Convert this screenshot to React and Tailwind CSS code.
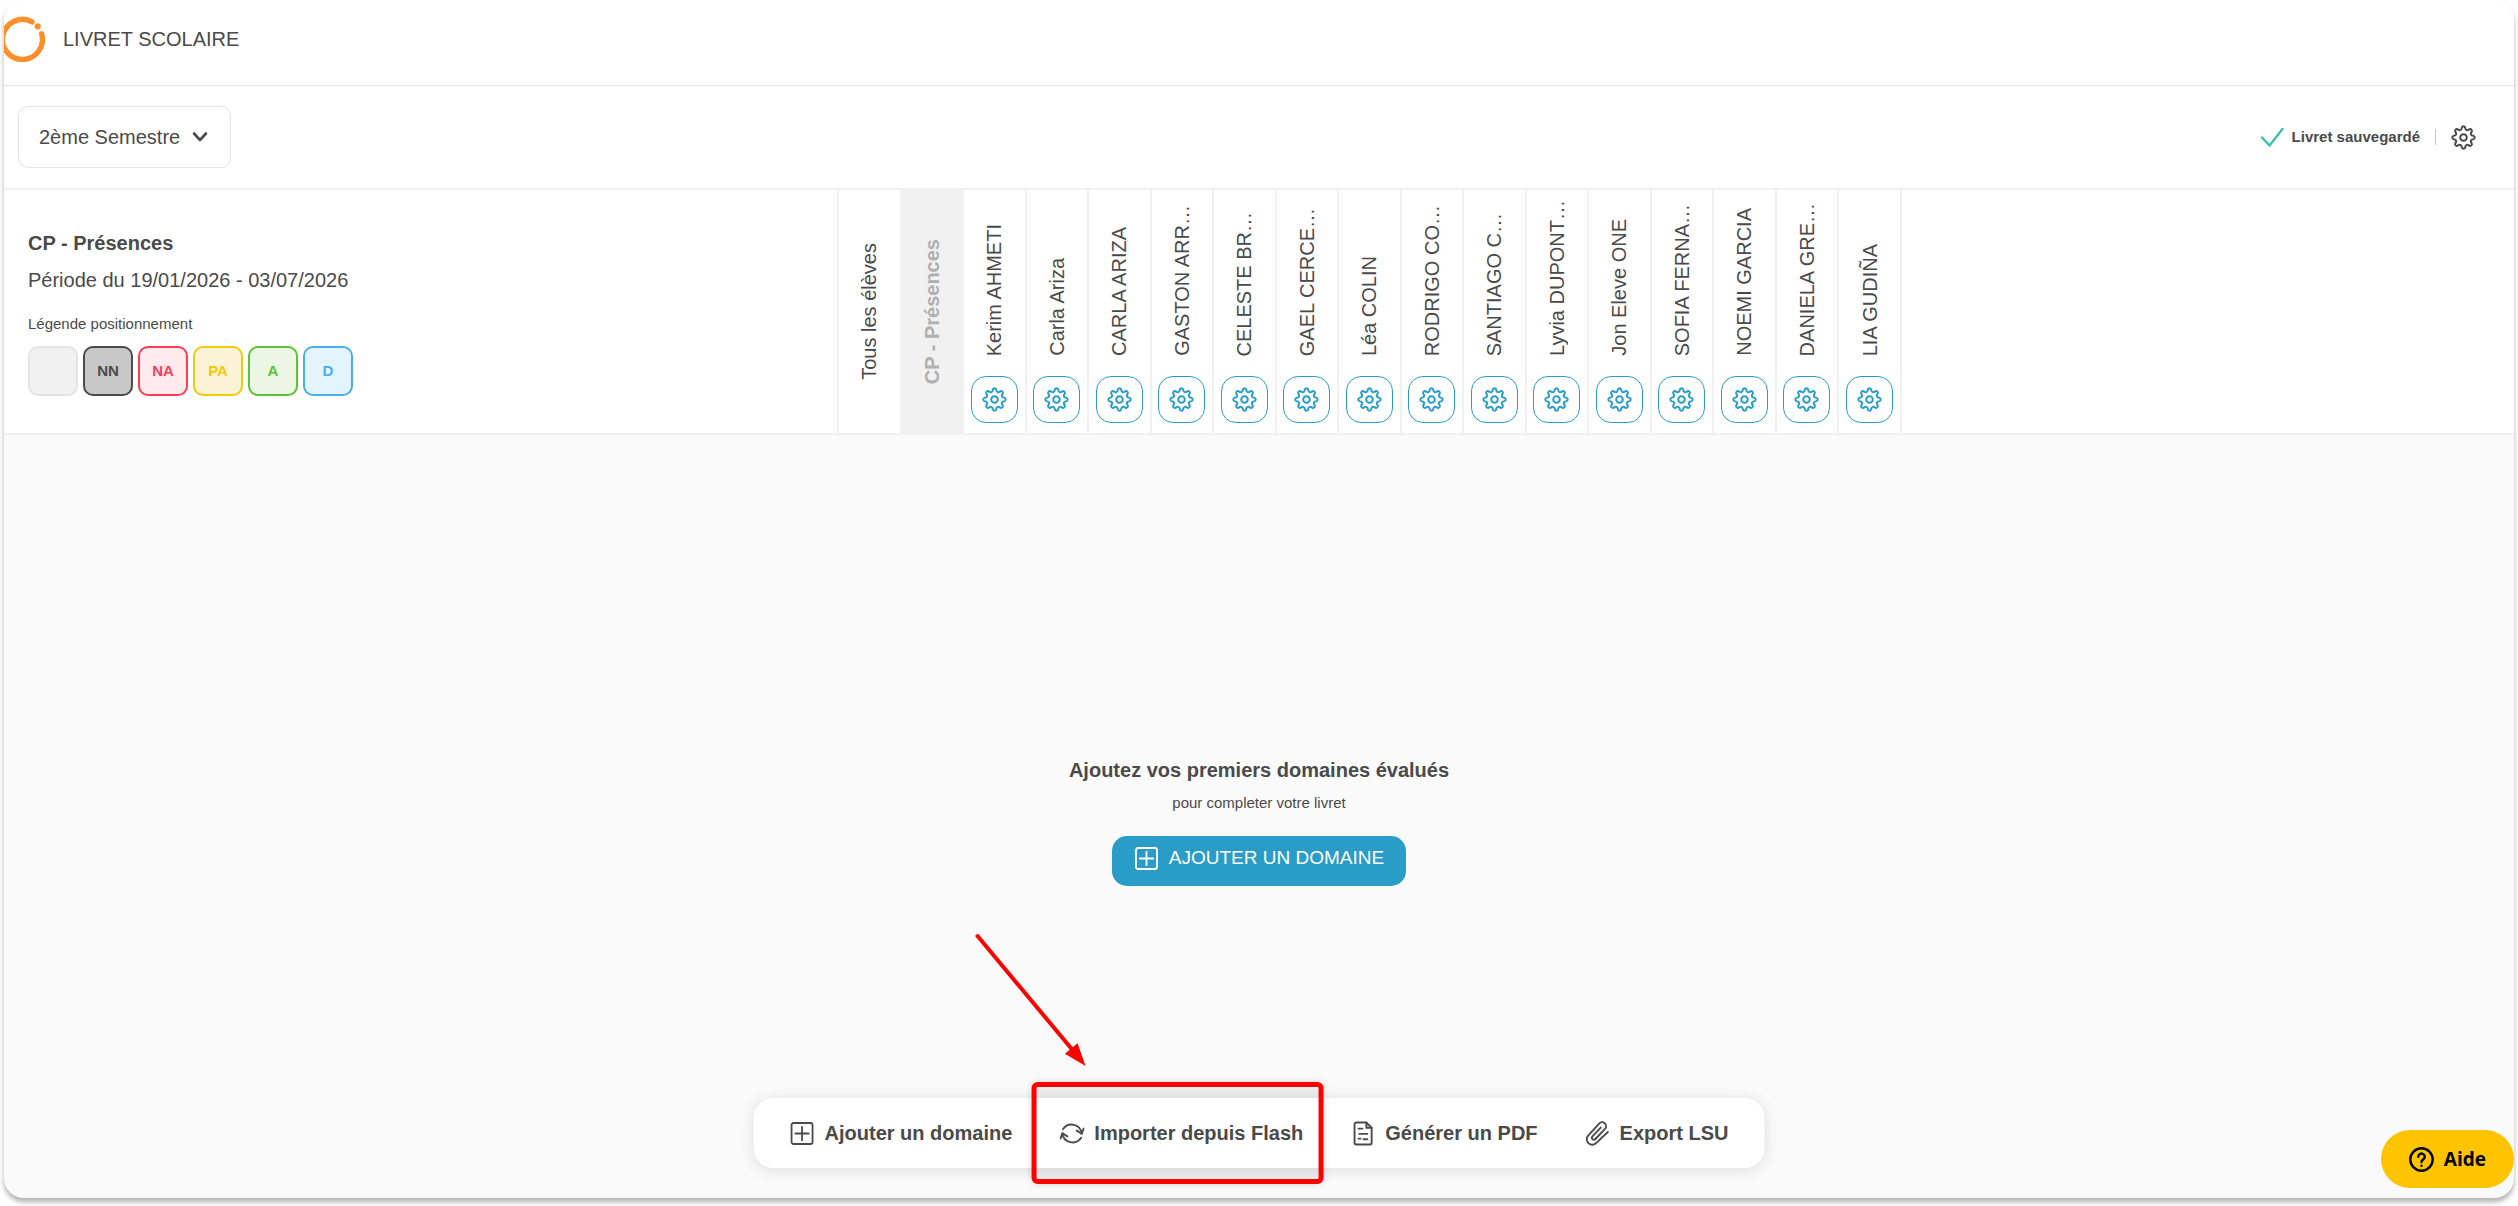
import React from 'react';

const levels = [
  { id: 'empty', label: '', style: 'bg-[#f1f1f1] border-[#e4e4e4]' },
  { id: 'nn', label: 'NN', style: 'bg-[#c8c8c8] border-[#4a4a4a] text-[#4a4a4a]' },
  { id: 'na', label: 'NA', style: 'bg-[#ffebee] border-[#ff3b58] text-[#ff3b58]' },
  { id: 'pa', label: 'PA', style: 'bg-[#fbf3d5] border-[#f2ca0c] text-[#f2ca0c]' },
  { id: 'a', label: 'A', style: 'bg-[#ebf6e5] border-[#5bc236] text-[#5bc236]' },
  { id: 'd', label: 'D', style: 'bg-[#e4f4ff] border-[#4aaee8] text-[#4aaee8]' }
];

const students = [
  'Kerim AHMETI',
  'Carla Ariza',
  'CARLA ARIZA',
  'GASTON ARR…',
  'CELESTE BR…',
  'GAEL CERCE…',
  'Léa COLIN',
  'RODRIGO CO…',
  'SANTIAGO C…',
  'Lyvia DUPONT…',
  'Jon Eleve ONE',
  'SOFIA FERNA…',
  'NOEMI GARCIA',
  'DANIELA GRE…',
  'LIA GUDIÑA'
];

// Eight rounded teeth, one pointing up
const gearPath = (() => {
  const point = (r, deg) => {
    const a = ((deg - 90) * Math.PI) / 180;
    return `${(12.5 + r * Math.cos(a)).toFixed(2)} ${(12.5 + r * Math.sin(a)).toFixed(2)}`;
  };
  let d = `M${point(10.2, -9)}`;
  for (let i = 0; i < 8; i++) {
    const a = i * 45;
    d += `A1.7 1.7 0 0 1 ${point(10.2, a + 9)}L${point(9.2, a + 12)}`;
    d += `A1.9 1.9 0 0 0 ${point(9.2, a + 33)}L${point(10.2, a + 36)}`;
  }
  return d + 'Z';
})();

const Gear = () => (
  <svg width="25" height="25" viewBox="0 0 25 25" fill="none" stroke="currentColor" strokeWidth="2" strokeLinejoin="round" aria-hidden="true">
    <path d={gearPath} />
    <circle cx="12.5" cy="12.5" r="3.3" />
  </svg>
);

const Logo = () => (
  <svg width="41" height="46" viewBox="4 0 41 46" fill="none" className="shrink-0" aria-hidden="true">
    <path d="M32 5.900A20 20 0 1 0 41.600 17.800" stroke="#ff8e2b" strokeWidth="5.400" strokeLinecap="round" />
    <circle cx="37.700" cy="10.300" r="3.100" fill="#ff8e2b" />
  </svg>
);

const PlusSquare = () => (
  <svg width="25" height="25" viewBox="0 0 25 25" fill="none" stroke="currentColor" strokeWidth="1.8" strokeLinecap="round" aria-hidden="true">
    <rect x="2" y="2" width="21" height="21" rx="2" />
    <path d="M12.5 5.8v13.4M5.8 12.5h13.4" />
  </svg>
);

const Sync = () => (
  <svg width="25" height="25" viewBox="0 0 25 25" fill="none" stroke="currentColor" strokeWidth="1.9" strokeLinecap="round" strokeLinejoin="round" aria-hidden="true">
    <path d="M3.4 8.2A10.3 10.3 0 0 1 22.2 12.6" />
    <path d="M17.2 9.6l4.9 3.2L24.1 7.600" />
    <path d="M21.6 16.8A10.3 10.3 0 0 1 2.800 12.400" />
    <path d="M7.800 15.400l-4.900-3.200L1 17.400" />
  </svg>
);

const Document = () => (
  <svg width="25" height="25" viewBox="0 0 25 25" fill="none" stroke="currentColor" strokeWidth="1.9" strokeLinecap="round" strokeLinejoin="round" aria-hidden="true">
    <path d="M15.8 1.500H5.700a1.700 1.700 0 0 0-1.700 1.700v18.600a1.700 1.700 0 0 0 1.700 1.700h13.700a1.700 1.700 0 0 0 1.700-1.700V6.800z" />
    <path d="M15.800 1.500v5.300h5.300" />
    <path d="M7.900 7.600h4M8.800 12.900h8M7.900 17.600h2.200M13 18.200h3.800" />
  </svg>
);

const Clip = () => (
  <svg width="25" height="25" viewBox="0 0 25 25" fill="none" stroke="currentColor" strokeWidth="1.9" strokeLinecap="round" strokeLinejoin="round" aria-hidden="true">
    <path d="M23.300 11L11.800 21.900a5.400 5.400 0 0 1-8.200-7.300L14.600 2.600a3.900 3.900 0 0 1 5.900 5.200L10.900 18a2 2 0 0 1-3-2.700L16.200 6.600" />
  </svg>
);

const StudentHeader = ({ name }) => (
  <th scope="col" className="border-r-2 border-[#f1f1f1] p-0 font-normal">
    <div className="flex h-[243px] flex-col items-center justify-end gap-5 pb-[10px]">
      <span className="rotate-180 leading-6 whitespace-nowrap [writing-mode:vertical-rl]">{name}</span>
      <button
        type="button"
        aria-label={`Options ${name}`}
        className="flex size-[47px] items-center justify-center rounded-[15px] border border-[#2a9cc8] text-[#2a9cc8]"
      >
        <Gear />
      </button>
    </div>
  </th>
);

const ToolbarButton = ({ icon, label, children }) => (
  <button type="button" className="relative flex h-full items-center gap-[10px] font-bold whitespace-nowrap">
    {icon}
    {label}
    {children}
  </button>
);

// Red frame and arrow around the highlighted action
const Highlight = () => (
  <span className="pointer-events-none absolute -inset-y-4 -right-5 -left-7 flex flex-col justify-between rounded-md border-5 border-[#ff0000] shadow-[0_0_6px_rgba(0,0,0,0.15)]">
    <span className="h-[11px] bg-black/5" />
    <span className="h-[11px] bg-black/5" />
    <svg width="120" height="140" viewBox="0 0 120 140" className="absolute -top-[157px] -left-[67px]" aria-hidden="true">
      <path d="M8 6L103 120" stroke="#ff0000" strokeWidth="4" strokeLinecap="round" />
      <path d="M116 136L95.300 123.700L108 113.300Z" fill="#ff0000" />
    </svg>
  </span>
);

const App = () => (
  <div className="min-h-screen overflow-hidden bg-white px-1 pb-2 font-['Liberation_Sans',Arial,sans-serif] text-[20px] text-[#4a4a4a]">
    <div className="relative flex min-h-[calc(100vh-8px)] flex-col rounded-[20px] bg-[#fafafa] shadow-[0_4px_5px_rgba(0,0,0,0.3)]">
      <header className="flex h-[86px] items-center gap-[18px] rounded-t-[20px] border-b border-[#e4e4e4] bg-white pb-[7px]">
        <Logo />
        <h1 className="text-[20px]">LIVRET SCOLAIRE</h1>
      </header>

      <div className="flex items-center justify-between border-b-2 border-[#f1f1f1] bg-white py-5 pr-[38px] pl-[14px]">
        <div className="relative">
          <select
            aria-label="Période"
            className="h-[62px] w-[213px] appearance-none rounded-[10px] border border-[#e4e4e4] bg-white pl-5"
          >
            <option>2ème Semestre</option>
          </select>
          <svg width="16" height="16" viewBox="0 0 16 16" fill="none" className="pointer-events-none absolute top-[23px] right-[23px]" aria-hidden="true">
            <path d="M2 4.500l6 6.500 6-6.500" stroke="#4a4a4a" strokeWidth="2.600" strokeLinecap="round" strokeLinejoin="round" />
          </svg>
        </div>
        <div className="flex items-center">
          <svg width="24" height="20" viewBox="0 0 24 20" fill="none" className="mr-2" aria-hidden="true">
            <path d="M2 10.500l7.500 8L22.500 2" stroke="#3dbfae" strokeWidth="2.400" strokeLinecap="round" strokeLinejoin="round" />
          </svg>
          <span className="text-[15px] font-bold">Livret sauvegardé</span>
          <span className="mx-[15px] h-4 w-px bg-[#c8c8c8]" />
          <button type="button" aria-label="Paramètres">
            <Gear />
          </button>
        </div>
      </div>

      <div className="border-b-2 border-[#f1f1f1] bg-white">
        <table className="w-[1898px] table-fixed border-separate border-spacing-0">
          <thead>
            <tr>
              <th scope="col" className="w-[835px] border-r-2 border-[#f1f1f1] p-0 text-left align-top font-normal">
                <div className="px-6 pt-[41px]">
                  <h2 className="leading-6 font-bold">CP - Présences</h2>
                  <p className="mt-[13px] leading-6">Période du 19/01/2026 - 03/07/2026</p>
                  <p className="mt-[22px] text-[15px] leading-5">Légende positionnement</p>
                  <ul className="mt-3 flex gap-[5px]">
                    {levels.map((level) => (
                      <li
                        key={level.id}
                        className={`flex size-[50px] items-center justify-center rounded-[10px] border-2 text-[15px] font-bold ${level.style}`}
                      >
                        {level.label}
                      </li>
                    ))}
                  </ul>
                </div>
              </th>
              <th scope="col" className="border-r-2 border-[#f1f1f1] p-0 font-normal">
                <div className="flex h-[243px] items-center justify-center">
                  <span className="rotate-180 leading-6 whitespace-nowrap [writing-mode:vertical-rl]">Tous les élèves</span>
                </div>
              </th>
              <th scope="col" className="border-r-2 border-[#f1f1f1] bg-[#f1f1f1] p-0 font-bold text-[#b0b0b0]">
                <div className="flex h-[243px] items-center justify-center">
                  <span className="rotate-180 leading-6 whitespace-nowrap [writing-mode:vertical-rl]">CP - Présences</span>
                </div>
              </th>
              {students.map((name) => (
                <StudentHeader key={name} name={name} />
              ))}
            </tr>
          </thead>
        </table>
      </div>

      <main className="flex flex-1 flex-col items-center justify-center pt-[10px]">
        <h2 className="leading-6 font-bold">Ajoutez vos premiers domaines évalués</h2>
        <p className="mt-[11px] text-[15px] leading-5">pour completer votre livret</p>
        <button
          type="button"
          className="mt-[23px] flex h-[50px] items-center gap-[10px] rounded-[15px] bg-[#2a9cc8] px-[22px] pb-1 text-[19px] text-white"
        >
          <PlusSquare />
          AJOUTER UN DOMAINE
        </button>
      </main>

      <div className="absolute bottom-[30px] left-1/2 flex h-[70px] -translate-x-1/2 items-center gap-[47px] rounded-[20px] bg-white px-9 shadow-[0_2px_15px_rgba(0,0,0,0.12)]">
        <ToolbarButton icon={<PlusSquare />} label="Ajouter un domaine" />
        <ToolbarButton icon={<Sync />} label="Importer depuis Flash">
          <Highlight />
        </ToolbarButton>
        <ToolbarButton icon={<Document />} label="Générer un PDF" />
        <ToolbarButton icon={<Clip />} label="Export LSU" />
      </div>

      <button
        type="button"
        className="absolute right-0 bottom-[10px] flex h-[58px] items-center gap-[10px] rounded-full bg-[#ffc400] px-7 font-['Open_Sans','Noto_Sans',sans-serif] text-[19px] font-bold text-black"
      >
        <svg width="25" height="25" viewBox="0 0 25 25" fill="none" stroke="currentColor" strokeWidth="2.400" strokeLinecap="round" aria-hidden="true">
          <circle cx="12.500" cy="12.500" r="11.200" />
          <path d="M9.300 9.700a3.200 3.200 0 1 1 4.800 2.800c-1.100.7-1.600 1.300-1.600 2.600" />
          <path d="M12.500 18.600v.1" />
        </svg>
        Aide
      </button>
    </div>
  </div>
);

export default App;
